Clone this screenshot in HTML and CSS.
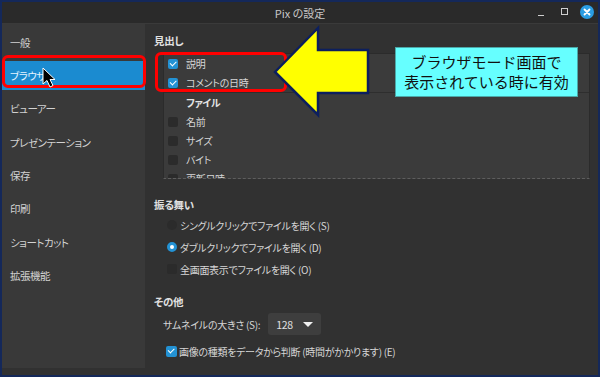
FILE: index.html
```html
<!DOCTYPE html>
<html lang="ja">
<head>
  <meta charset="UTF-8" />
  <meta name="viewport" content="width=device-width, initial-scale=1" />
  <title>Pix の設定</title>
  <link rel="stylesheet" href="styles.css">
</head>
<body>

  <div class="window">
    <header class="titlebar">
      <span></span>
      <span class="title">Pix の設定</span>
      <div class="controls">
        <span class="ctl-min"></span>
        <span class="ctl-max"></span>
        <span class="ctl-close">
          <svg width="14" height="14" viewBox="0 0 14 14">
            <path d="M4.5 4.5 L9.5 9.5 M9.5 4.5 L4.5 9.5" stroke="#fff" stroke-width="1.8" stroke-linecap="round" />
          </svg>
        </span>
      </div>
    </header>

    <div class="frame">
      <nav class="sidebar">
        <ul>
          <li>一般</li>
          <li class="active">ブラウザ</li>
          <li>ビューアー</li>
          <li>プレゼンテーション</li>
          <li>保存</li>
          <li>印刷</li>
          <li>ショートカット</li>
          <li>拡張機能</li>
        </ul>
      </nav>

      <main class="content">
        <h3 class="heading">見出し</h3>
        <div class="listbox">
          <div class="list-group">
            <div class="row"><span class="check on"></span>説明</div>
            <div class="row"><span class="check on"></span>コメントの日時</div>
          </div>
          <div class="row head">ファイル</div>
          <div class="row"><span class="check"></span>名前</div>
          <div class="row"><span class="check"></span>サイズ</div>
          <div class="row"><span class="check"></span>バイト</div>
          <div class="row"><span class="check"></span>更新日時</div>
        </div>

        <h3 class="heading heading-behave">振る舞い</h3>
        <div class="options">
          <div class="opt"><span class="radio"></span>シングルクリックでファイルを開く (S)</div>
          <div class="opt"><span class="radio on"></span>ダブルクリックでファイルを開く (D)</div>
          <div class="opt"><span class="check"></span>全画面表示でファイルを開く (O)</div>
        </div>

        <h3 class="heading heading-other">その他</h3>
        <div class="thumb-row">
          <span>サムネイルの大きさ (S):</span>
          <span class="dropdown">128 <span class="caret"></span></span>
        </div>
        <div class="check-row"><span class="check on"></span>画像の種類をデータから判断 (時間がかかります) (E)</div>
      </main>
    </div>
  </div>

  <!-- 注釈 -->
  <div class="mark mark-side"></div>
  <div class="mark mark-list"></div>
  <svg class="overlay" width="600" height="377" viewBox="0 0 600 377">
    <polygon points="275,72 318,28 318,50 368,50 368,93 318,93 318,115" fill="#ffff00" stroke="#0c1f5e" stroke-width="2.5" stroke-linejoin="miter" />
    <polygon points="43,68 43,84 47,80.5 50,87 53,85.5 50,79.5 55,79.5" fill="#000" stroke="#fff" stroke-width="1" stroke-linejoin="round" />
  </svg>
  <div class="callout">ブラウザモード画面で<br>表示されている時に有効</div>

</body>
</html>
```

FILE: styles.css
```css
body {
  margin: 0;
  position: relative;
  width: 600px;
  height: 377px;
  font-family: "Noto Sans CJK JP", "Noto Sans", sans-serif;
  font-size: 10px;
  font-feature-settings: "palt";
  color: #d6d6d6;
  background: #14285a;
  overflow: hidden;
}
.window {
  width: 600px;
  height: 377px;
  box-sizing: border-box;
  border: 2px solid #14285a;
  display: flex;
  flex-direction: column;
}
.titlebar {
  height: 21px;
  background: #2a2a2a;
  display: grid;
  grid-template-columns: 1fr auto 1fr;
  align-items: center;
  border-bottom: 1px solid #3a3a3a;
}
.title {
  color: #c8c8c8;
  font-size: 11px;
}
.controls {
  justify-self: end;
  display: flex;
  align-items: center;
  padding-right: 4px;
}
.ctl-min {
  width: 6px;
  height: 1px;
  background: #cfcfcf;
  margin-top: 5px;
}
.ctl-max {
  width: 5px;
  height: 5px;
  border: 1px solid #cfcfcf;
  margin-left: 17px;
  margin-bottom: 2px;
}
.ctl-close {
  width: 14px;
  height: 14px;
  border-radius: 50%;
  background: #2a9de3;
  margin-left: 12px;
  margin-bottom: 2px;
  display: flex;
}
.frame {
  flex: 1;
  display: flex;
  align-items: flex-start;
  background: #313131;
  padding-bottom: 7px;
  min-height: 0;
}
.sidebar {
  width: 143px;
  height: 100%;
  background: #393939;
}
.sidebar ul {
  list-style: none;
  margin: 0;
  padding: 3.5px 0 0 0;
}
.sidebar li {
  height: 29px;
  line-height: 29px;
  padding-left: 8px;
  margin-bottom: 4.4px;
  font-size: 10.5px;
  letter-spacing: -0.5px;
  color: #d2d2d2;
}
.sidebar li.active {
  background: #1b8bd0;
  color: #e6f4ff;
}
.content {
  flex: 1;
  padding: 9px 8px 0 9px;
  display: flex;
  flex-direction: column;
  letter-spacing: -0.3px;
}
.heading {
  margin: 0;
  font-size: 10.5px;
  font-weight: bold;
  line-height: 16px;
  color: #e0e0e0;
}
.heading-behave {
  margin-top: 18px;
}
.heading-other {
  margin-top: 14px;
}
.listbox {
  margin: 4px 0 0 9px;
  height: 126px;
  box-sizing: border-box;
  overflow: hidden;
  background: #3b3b3b;
  border: 1px solid #2b2b2b;
  border-bottom: 1px dashed #5e5e5e;
}
.list-group {
  border-bottom: 1px solid #2e2e2e;
}
.row {
  height: 19px;
  display: flex;
  align-items: center;
  gap: 8px;
  padding-left: 4px;
}
.row.head {
  padding-left: 22px;
  font-weight: bold;
  color: #e4e4e4;
}
/* チェックボックスとラジオ */
.check {
  width: 10px;
  height: 10px;
  border-radius: 2px;
  background: #2b2b2b;
  position: relative;
  flex: none;
}
.check.on {
  background: #2392d4;
}
.check.on::after {
  content: "";
  position: absolute;
  left: 2px;
  top: 2px;
  width: 5px;
  height: 2.5px;
  border-left: 1.6px solid #fff;
  border-bottom: 1.6px solid #fff;
  transform: rotate(-45deg);
}
.radio {
  width: 10px;
  height: 10px;
  border-radius: 50%;
  background: #2b2b2b;
  flex: none;
  box-sizing: border-box;
}
.radio.on {
  background: #fff;
  border: 3px solid #2392d4;
}
.options {
  margin-top: 1px;
}
.opt {
  height: 22px;
  display: flex;
  align-items: center;
  gap: 3px;
  padding-left: 13px;
}
.thumb-row {
  margin-top: 3px;
  padding-left: 9px;
  display: flex;
  align-items: center;
  gap: 8px;
}
.dropdown {
  width: 53px;
  height: 22px;
  box-sizing: border-box;
  padding: 0 8px;
  border-radius: 3px;
  background: #3e3e3e;
  display: flex;
  align-items: center;
  justify-content: space-between;
  color: #e0e0e0;
  font-size: 10.5px;
}
.caret {
  width: 0;
  height: 0;
  border-left: 5px solid transparent;
  border-right: 5px solid transparent;
  border-top: 5px solid #f0f0f0;
}
.check-row {
  margin-top: 6px;
  height: 20px;
  display: flex;
  align-items: center;
  gap: 2px;
  padding-left: 12px;
}
.check-row .check {
  width: 11px;
  height: 11px;
}
/* 注釈の枠と吹き出し */
.mark {
  position: absolute;
  box-sizing: border-box;
  border: 3px solid #ff0000;
  border-radius: 6px;
}
.mark-side {
  left: 2px;
  top: 55px;
  width: 144px;
  height: 33px;
}
.mark-list {
  left: 155px;
  top: 52px;
  width: 132px;
  height: 40px;
}
.overlay {
  position: absolute;
  left: 0;
  top: 0;
}
.callout {
  position: absolute;
  left: 395px;
  top: 47px;
  width: 183px;
  height: 50px;
  box-sizing: border-box;
  background: #66ffff;
  border: 1px solid #4aa9a9;
  color: #111;
  font-size: 15px;
  font-feature-settings: normal;
  line-height: 20px;
  text-align: center;
  padding-top: 4px;
}
```
